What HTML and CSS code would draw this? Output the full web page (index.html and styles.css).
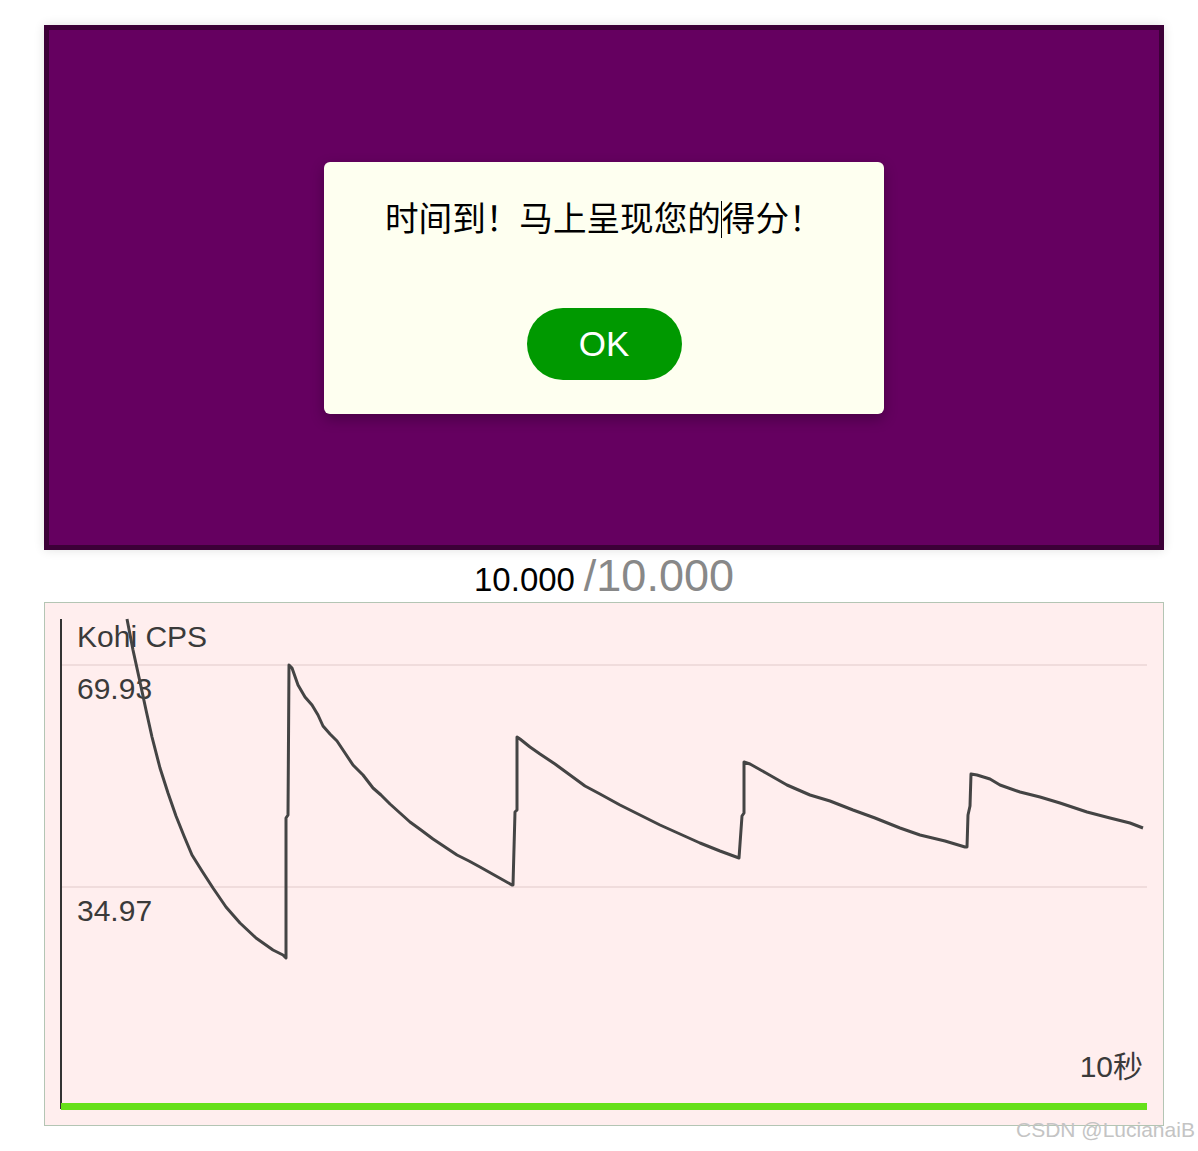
FILE: index.html
```html
<!DOCTYPE html>
<html lang="zh-CN">
<head>
<meta charset="utf-8">
<title>Kohi CPS</title>
<link rel="stylesheet" href="styles.css">
</head>
<body>
<div class="page">
  <div class="stage">
    <div class="dialog">
      <div class="msg">时间到！马上呈现您的<span class="caret"></span>得分！</div>
      <button class="ok">OK</button>
    </div>
  </div>
  <div class="score"><span class="cur">10.000</span> <span class="total">/10.000</span></div>
  <div class="chart">
    <svg class="plot" width="1118" height="522" viewBox="45 603 1118 522" xmlns="http://www.w3.org/2000/svg">
      <line x1="61" y1="665" x2="1147" y2="665" class="grid"/>
      <line x1="61" y1="887" x2="1147" y2="887" class="grid"/>
      <line x1="61" y1="619" x2="61" y2="1109" class="axis"/>
      <rect x="61" y="1103" width="1086" height="7" class="progress"/>
      <text x="77" y="647" class="lbl">Kohi CPS</text>
      <text x="77" y="699" class="lbl">69.93</text>
      <text x="77" y="921" class="lbl">34.97</text>
      <text x="1143" y="1077" class="lbl end">10秒</text>
      <path class="cps" d="M127,619 L133,650 L140,682 L146,710 L152,737 L160,768 L168,793 L176,816 L184,836 L192,855 L202,871 L213,888 L226,907 L240,923 L256,938 L273,950 L283,955 L286,958 L286,818 L288,815 L289,665 L292,668 L298,685 L305,697 L312,705 L318,715 L323,726 L330,734 L337,741 L345,753 L353,765 L363,775 L373,788 L381,795 L390,804 L400,813 L410,822 L421,830 L433,839 L445,847 L457,855 L469,861 L480,867 L496,876 L512,885 L513,885 L515,812 L517,810 L517,737 L520,739 L530,747 L540,754 L555,764 L570,775 L585,786 L600,794 L620,805 L640,815 L660,825 L680,834 L700,843 L720,851 L739,858 L741,830 L742,816 L744,813 L744,762 L750,764 L766,773 L787,785 L810,795 L830,801 L853,810 L875,818 L900,828 L920,835 L945,841 L965,847 L967,847 L968,815 L970,806 L971,774 L977,775 L990,779 L1000,785 L1020,792 L1040,797 L1060,803 L1087,812 L1110,818 L1130,823 L1143,828"/>
    </svg>
  </div>
  <div class="watermark">CSDN @LucianaiB</div>
</div>
</body>
</html>
```

FILE: styles.css
```css
html, body {
  margin: 0;
  padding: 0;
  background: #ffffff;
}

.page {
  position: relative;
  width: 1198px;
  min-height: 1151px;
  padding: 25px 0 0 44px;
  box-sizing: border-box;
  font-family: "Liberation Sans", Arial, "Noto Sans CJK SC", sans-serif;
}

.stage {
  width: 1120px;
  height: 525px;
  box-sizing: border-box;
  background: #650060;
  border: 5px solid #3c0037;
  box-shadow: 0 0 10px rgba(0, 0, 0, 0.12);
  display: flex;
  align-items: center;
  justify-content: center;
}

.dialog {
  width: 560px;
  height: 252px;
  box-sizing: border-box;
  background: #fefff0;
  border-radius: 6px;
  box-shadow: 0 5px 14px rgba(0, 0, 0, 0.28);
  display: flex;
  flex-direction: column;
  align-items: center;
  padding-top: 33px;
}

.msg {
  align-self: flex-start;
  padding-left: 61px;
  font-family: "Noto Sans CJK SC", sans-serif;
  font-size: 33.6px;
  line-height: 44px;
  color: #000000;
  white-space: nowrap;
}

.caret {
  display: inline-block;
  width: 0;
  height: 37px;
  border-left: 1px solid #000;
  vertical-align: -7px;
}

.ok {
  margin-top: 69px;
  width: 155px;
  height: 72px;
  border: none;
  border-radius: 36px;
  background: #009900;
  color: #ffffff;
  font-family: "Liberation Sans", Arial, sans-serif;
  font-size: 35px;
  padding: 0;
  line-height: 72px;
}

.score {
  width: 1120px;
  height: 52px;
  line-height: 52px;
  font-size: 32px;
  text-align: center;
  white-space: nowrap;
}

.cur {
  font-size: 33px;
  color: #000000;
}

.total {
  font-size: 45px;
  color: #888888;
}

.chart {
  width: 1120px;
  height: 524px;
  box-sizing: border-box;
  border: 1px solid #b4c5b4;
  background: #ffeeee;
}

.plot {
  display: block;
}

.grid {
  stroke: #f0dcdc;
  stroke-width: 2;
}

.axis {
  stroke: #333333;
  stroke-width: 2;
}

.progress {
  fill: #66e01a;
}

.lbl {
  font-family: "Liberation Sans", Arial, "Noto Sans CJK SC", sans-serif;
  font-size: 30px;
  fill: #3a3a3a;
}

.end {
  text-anchor: end;
}

.cps {
  fill: none;
  stroke: #444444;
  stroke-width: 3;
  stroke-linejoin: round;
}

.watermark {
  position: absolute;
  left: 1016px;
  top: 1118px;
  font-family: "Liberation Sans", Arial, sans-serif;
  font-size: 21px;
  color: #c4c4c4;
  white-space: nowrap;
}
```
